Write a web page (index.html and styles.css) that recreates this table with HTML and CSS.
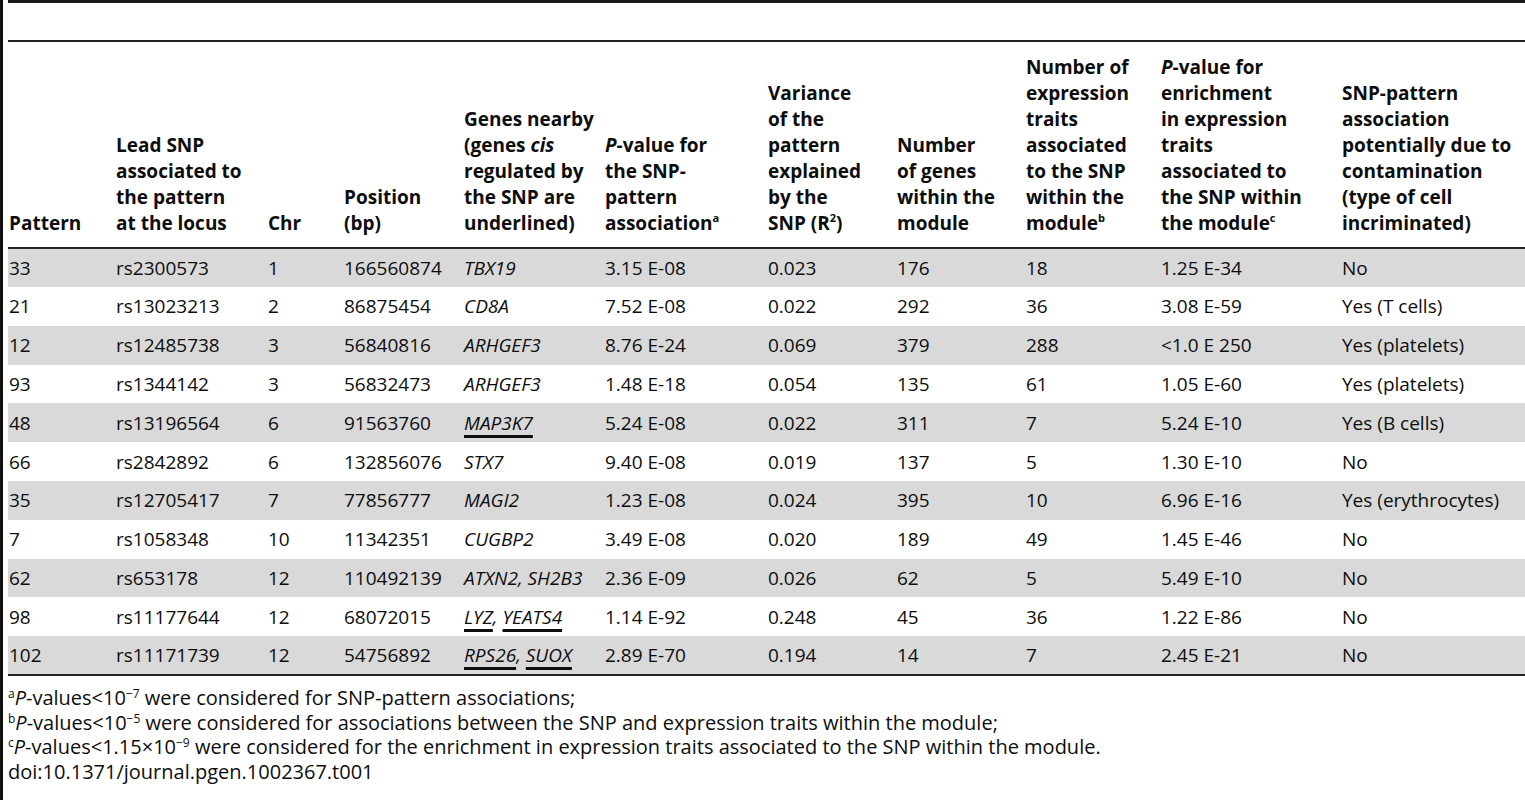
FILE: index.html
```html
<!DOCTYPE html>
<html>
  <head>
    <meta charset="utf-8">
    <title>Table 1</title>
    <link rel="stylesheet" href="styles.css">
  </head>
  <body>
    <div class="page">
      <div class="caption-band"></div>
      <table class="data">
        <colgroup>
          <col class="c-pattern">
          <col class="c-snp">
          <col class="c-chr">
          <col class="c-pos">
          <col class="c-genes">
          <col class="c-pval">
          <col class="c-var">
          <col class="c-ngenes">
          <col class="c-nexpr">
          <col class="c-penr">
          <col class="c-contam">
        </colgroup>
        <thead>
          <tr>
            <th>Pattern</th>
            <th>Lead SNP<br>associated to<br>the pattern<br>at the locus</th>
            <th>Chr</th>
            <th>Position<br>(bp)</th>
            <th>Genes nearby<br>(genes <i>cis</i><br>regulated by<br>the SNP are<br>underlined)</th>
            <th><i>P</i>-value for<br>the SNP-<br>pattern<br>association<sup>a</sup></th>
            <th>Variance<br>of the<br>pattern<br>explained<br>by the<br>SNP (R<sup>2</sup>)</th>
            <th>Number<br>of genes<br>within the<br>module</th>
            <th>Number of<br>expression<br>traits<br>associated<br>to the SNP<br>within the<br>module<sup>b</sup></th>
            <th><i>P</i>-value for<br>enrichment<br>in expression<br>traits<br>associated to<br>the SNP within<br>the module<sup>c</sup></th>
            <th>SNP-pattern<br>association<br>potentially due to<br>contamination<br>(type of cell<br>incriminated)</th>
          </tr>
        </thead>
        <tbody>
          <tr><td>33</td><td>rs2300573</td><td>1</td><td>166560874</td><td><i>TBX19</i></td><td>3.15 E-08</td><td>0.023</td><td>176</td><td>18</td><td>1.25 E-34</td><td>No</td></tr>
          <tr><td>21</td><td>rs13023213</td><td>2</td><td>86875454</td><td><i>CD8A</i></td><td>7.52 E-08</td><td>0.022</td><td>292</td><td>36</td><td>3.08 E-59</td><td>Yes (T cells)</td></tr>
          <tr><td>12</td><td>rs12485738</td><td>3</td><td>56840816</td><td><i>ARHGEF3</i></td><td>8.76 E-24</td><td>0.069</td><td>379</td><td>288</td><td>&lt;1.0 E 250</td><td>Yes (platelets)</td></tr>
          <tr><td>93</td><td>rs1344142</td><td>3</td><td>56832473</td><td><i>ARHGEF3</i></td><td>1.48 E-18</td><td>0.054</td><td>135</td><td>61</td><td>1.05 E-60</td><td>Yes (platelets)</td></tr>
          <tr><td>48</td><td>rs13196564</td><td>6</td><td>91563760</td><td><i class="cis">MAP3K7</i></td><td>5.24 E-08</td><td>0.022</td><td>311</td><td>7</td><td>5.24 E-10</td><td>Yes (B cells)</td></tr>
          <tr><td>66</td><td>rs2842892</td><td>6</td><td>132856076</td><td><i>STX7</i></td><td>9.40 E-08</td><td>0.019</td><td>137</td><td>5</td><td>1.30 E-10</td><td>No</td></tr>
          <tr><td>35</td><td>rs12705417</td><td>7</td><td>77856777</td><td><i>MAGI2</i></td><td>1.23 E-08</td><td>0.024</td><td>395</td><td>10</td><td>6.96 E-16</td><td>Yes (erythrocytes)</td></tr>
          <tr><td>7</td><td>rs1058348</td><td>10</td><td>11342351</td><td><i>CUGBP2</i></td><td>3.49 E-08</td><td>0.020</td><td>189</td><td>49</td><td>1.45 E-46</td><td>No</td></tr>
          <tr><td>62</td><td>rs653178</td><td>12</td><td>110492139</td><td><i>ATXN2, SH2B3</i></td><td>2.36 E-09</td><td>0.026</td><td>62</td><td>5</td><td>5.49 E-10</td><td>No</td></tr>
          <tr><td>98</td><td>rs11177644</td><td>12</td><td>68072015</td><td><i class="cis">LYZ</i><i>,</i> <i class="cis">YEATS4</i></td><td>1.14 E-92</td><td>0.248</td><td>45</td><td>36</td><td>1.22 E-86</td><td>No</td></tr>
          <tr><td>102</td><td>rs11171739</td><td>12</td><td>54756892</td><td><i class="cis">RPS26</i><i>,</i> <i class="cis">SUOX</i></td><td>2.89 E-70</td><td>0.194</td><td>14</td><td>7</td><td>2.45 E-21</td><td>No</td></tr>
        </tbody>
      </table>
      <div class="notes">
        <p><sup>a</sup><i>P</i>-values&lt;10<sup>&minus;7</sup> were considered for SNP-pattern associations;</p>
        <p><sup>b</sup><i>P</i>-values&lt;10<sup>&minus;5</sup> were considered for associations between the SNP and expression traits within the module;</p>
        <p><sup>c</sup><i>P</i>-values&lt;1.15&times;10<sup>&minus;9</sup> were considered for the enrichment in expression traits associated to the SNP within the module.</p>
        <p>doi:10.1371/journal.pgen.1002367.t001</p>
      </div>
    </div>
  </body>
</html>
```

FILE: styles.css
```css
*, *::before, *::after {
  padding: 0;
  margin: 0;
  box-sizing: border-box;
}

body {
  font-family: "Open Sans", "Liberation Sans", sans-serif;
  color: #0d0d0d;
  background: #fff;
}

.page {border-left: 3px solid #111; padding-left: 5px; min-height: 800px;}
.caption-band {height: 42px; border-top: 3px solid #1a1a1a; border-bottom: 2px solid #222;}

.data {width: 1517px; table-layout: fixed; border-collapse: collapse; font-size: 19px;}
.data th, .data td {text-align: left; padding: 0 4px 0 1px; white-space: nowrap;}
.data th {vertical-align: bottom; font-weight: 700; line-height: 26px; padding-top: 12px; padding-bottom: 11px; border-bottom: 2px solid #222;}
.data td {line-height: 26px; height: 38.8px; padding-top: 6px; padding-bottom: 6px; vertical-align: middle;}
.data tbody tr:nth-child(odd) {background: #d9d9d9;}
.data tbody tr:last-child td {border-bottom: 2px solid #222;}
.data sup {font-size: 11px; line-height: 0; vertical-align: 8px;}
.cis {text-decoration: underline; text-decoration-thickness: 3px; text-underline-offset: 5px;}

.c-pattern {width: 107px;}
.c-snp {width: 152px;}
.c-chr {width: 76px;}
.c-pos {width: 120px;}
.c-genes {width: 141px;}
.c-pval {width: 163px;}
.c-var {width: 129px;}
.c-ngenes {width: 129px;}
.c-nexpr {width: 135px;}
.c-penr {width: 181px;}
.c-contam {width: 184px;}

.notes {padding-top: 10px; font-size: 20px; line-height: 24.5px;}
.notes sup {font-size: 12px; line-height: 0; vertical-align: 7px;}
```
